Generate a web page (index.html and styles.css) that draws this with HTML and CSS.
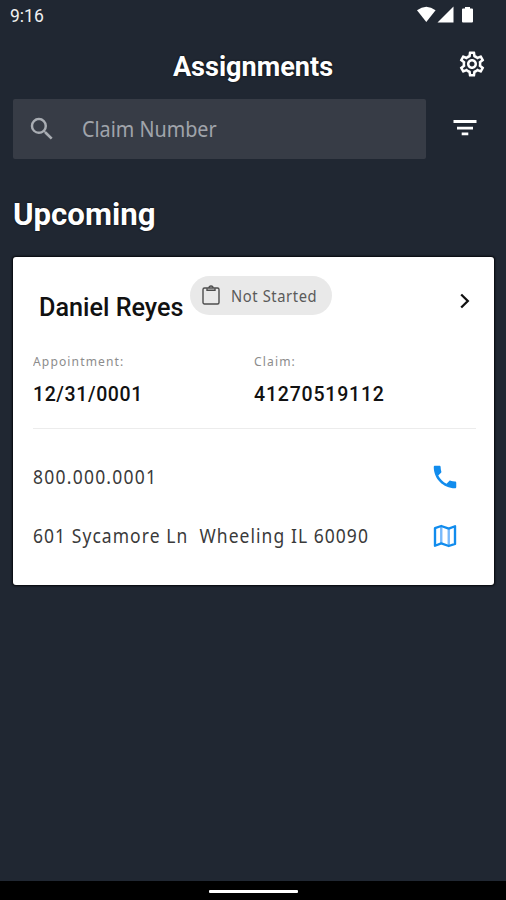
FILE: index.html
```html
<!DOCTYPE html>
<html lang="en">
<head>
<meta charset="utf-8">
<title>Assignments</title>
<link rel="stylesheet" href="styles.css">
</head>
<body>
<div class="status">
  <span class="time">9:16</span>
  <svg class="status-icons" width="56" height="18" viewBox="0 0 56 18" fill="#fff">
    <path d="M0 4.200Q9.300-2.800 18.600 4.200L9.300 16z"/>
    <path d="M20.500 16.600L36.500 0.600V16.600z"/>
    <path d="M48 1h5v1.500h2a1 1 0 0 1 1 1V15.600a1 1 0 0 1-1 1H46a1 1 0 0 1-1-1V3.500a1 1 0 0 1 1-1h2z"/>
  </svg>
</div>
<header class="header">
  <h1 class="title"><span>Assignments</span></h1>
  <svg class="gear" width="30" height="30" viewBox="0 0 24 24" fill="#fff"><path d="M19.430 12.980c.04-.32.07-.64.07-.98s-.03-.66-.07-.98l2.110-1.650c.19-.15.24-.42.12-.64l-2-3.460c-.09-.16-.26-.25-.44-.25-.06 0-.12.010-.17.030l-2.490 1c-.52-.4-1.080-.73-1.690-.98l-.38-2.650C14.460 2.180 14.250 2 14 2h-4c-.25 0-.46.18-.49.42l-.38 2.650c-.61.25-1.170.59-1.690.98l-2.490-1c-.06-.02-.12-.03-.18-.03-.17 0-.34.09-.43.25l-2 3.460c-.13.22-.07.49.12.64l2.110 1.650c-.04.32-.07.65-.07.98s.03.66.07.98l-2.110 1.650c-.19.15-.24.42-.12.64l2 3.460c.09.16.26.25.44.25.06 0 .12-.01.17-.03l2.490-1c.52.4 1.080.73 1.690.98l.38 2.650c.03.24.24.42.49.42h4c.25 0 .46-.18.49-.42l.38-2.650c.61-.25 1.170-.59 1.690-.98l2.490 1c.06.02.12.03.18.03.17 0 .34-.09.43-.25l2-3.460c.12-.22.07-.49-.12-.64l-2.110-1.650zm-1.980-1.710c.04.31.05.52.05.73 0 .21-.02.43-.05.73l-.14 1.130.89.7 1.080.84-.7 1.210-1.270-.51-1.040-.42-.9.680c-.43.32-.84.56-1.250.73l-1.060.43-.16 1.130-.2 1.350h-1.400l-.19-1.350-.16-1.130-1.060-.43c-.43-.18-.83-.41-1.230-.71l-.91-.7-1.060.43-1.270.51-.7-1.210 1.080-.84.89-.7-.14-1.130c-.03-.31-.05-.54-.05-.74s.02-.43.05-.73l.14-1.130-.89-.7-1.080-.84.7-1.210 1.270.51 1.040.42.9-.68c.43-.32.84-.56 1.250-.73l1.060-.43.16-1.130.2-1.350h1.390l.19 1.350.16 1.130 1.060.43c.43.18.83.41 1.230.71l.91.7 1.060-.43 1.270-.51.7 1.210-1.070.85-.89.7.14 1.130zM12 8c-2.210 0-4 1.790-4 4s1.790 4 4 4 4-1.790 4-4-1.790-4-4-4zm0 6c-1.100 0-2-.9-2-2s.9-2 2-2 2 .9 2 2-.9 2-2 2z"/></svg>
</header>
<div class="search-row">
  <div class="search">
    <svg width="30" height="30" viewBox="0 0 24 24" fill="#a9adb3"><path d="M15.500 14h-.79l-.28-.27A6.470 6.470 0 0 0 16 9.500 6.500 6.500 0 1 0 9.500 16c1.610 0 3.090-.59 4.230-1.570l.27.28v.79l5 4.990L20.490 19l-4.990-5zm-6 0C7.010 14 5 11.990 5 9.500S7.010 5 9.500 5 14 7.010 14 9.500 11.990 14 9.500 14z"/></svg>
    <span class="placeholder">Claim Number</span>
  </div>
  <svg class="filter" width="24" height="18" viewBox="0 0 24 18" fill="#fff"><path d="M0.500 1h23v3H0.500zM4 7.800h16v2.800H4zM8.700 13.500h6.600v2.800H8.700z"/></svg>
</div>
<h2 class="section"><span>Upcoming</span></h2>
<article class="card">
  <div class="card-head">
    <span class="name">Daniel Reyes</span>
    <span class="chip">
      <svg width="18" height="21" viewBox="0 0 18 21" fill="none" stroke="#4d4d4d" stroke-width="1.400"><rect x="1" y="3" width="16" height="16" rx="1.500"/><path d="M5 3.200v2h8v-2M7 3a2 2 0 0 1 4 0"/></svg>
      <span class="chip-text">Not Started</span>
    </span>
    <svg class="chevron" width="10" height="16" viewBox="0 0 10 16" fill="none" stroke="#111" stroke-width="2.300"><path d="M1.200 1.500L7.800 8l-6.600 6.500"/></svg>
  </div>
  <div class="facts">
    <div class="fact"><span class="label">Appointment:</span><span class="value date">12/31/0001</span></div>
    <div class="fact"><span class="label">Claim:</span><span class="value">41270519112</span></div>
  </div>
  <div class="contact">
    <span class="line phone">800.000.0001</span>
    <svg width="30" height="30" viewBox="0 0 24 24" fill="#118ced"><path d="M6.620 10.790c1.440 2.830 3.760 5.140 6.590 6.590l2.200-2.200c.27-.27.67-.36 1.020-.24 1.120.37 2.330.57 3.570.57.55 0 1 .45 1 1V20c0 .55-.45 1-1 1C10.610 21 3 13.390 3 4c0-.55.45-1 1-1h3.500c.55 0 1 .45 1 1 0 1.250.2 2.450.57 3.570.11.35.03.74-.25 1.020l-2.200 2.200z"/></svg>
  </div>
  <div class="contact">
    <span class="line address">601 Sycamore Ln&nbsp; Wheeling IL 60090</span>
    <svg width="30" height="30" viewBox="0 0 24 24" fill="none" stroke="#118ced" stroke-width="1.900" stroke-linejoin="round"><path d="M9 4.500v13M15 6.500v13" stroke="#78b9fb"/><path d="M4 5.700L9 4l6 2.100 5-1.900v14.100L15 20l-6-2.100-5 1.900z"/></svg>
  </div>
</article>
<footer class="nav"><div class="handle"></div></footer>
</body>
</html>
```
FILE: styles.css
```css
* { box-sizing: border-box; }
body {
  margin: 0;
  height: 900px;
  display: flex;
  flex-direction: column;
  background: #202732;
  color: #fff;
  font-family: Roboto, sans-serif;
  overflow: hidden;
}
svg { display: block; flex: none; }
span { white-space: nowrap; }
.status {
  height: 32px;
  padding: 0 33px 0 10px;
  display: flex;
  align-items: center;
  justify-content: space-between;
}
.time { font-size: 17.500px; color: #f1f1f1; }
.status-icons { margin-top: -2px; }
.header {
  height: 67px;
  padding: 0 19px 0 49px;
  display: flex;
  align-items: center;
}
.title {
  flex: 1;
  margin: 2px 0 0;
  text-align: center;
  font-size: 27.100px;
  line-height: 32px;
  font-weight: 700;
}
.gear { margin-top: -3px; }
.title, .section { text-shadow: 0 0 2px #000; }
.search-row {
  height: 60px;
  padding: 0 29px 0 13px;
  display: flex;
  align-items: center;
  justify-content: space-between;
}
.search {
  width: 413px;
  height: 60px;
  padding-left: 14px;
  border-radius: 2px;
  background: #373c46;
  display: flex;
  align-items: center;
  gap: 25px;
}
.placeholder, .chip-text, .label, .line {
  font-family: "Noto Sans", sans-serif;
  transform-origin: left center;
}
.placeholder {
  margin-top: -2px;
  font-size: 21.500px;
  color: #a0a4ab;
  transform: scaleX(.92);
}
.filter { margin-top: -2px; }
.section {
  margin: 38px 0 0 13px;
  font-size: 31.200px;
  line-height: 36px;
  font-weight: 700;
}
.card {
  height: 328px;
  margin: 24px 12px 0 13px;
  border-radius: 3px;
  padding: 19px 18px 0 20px;
  background: #fff;
  color: #111;
  box-shadow: 0 0 2px 1px #06080c;
}
.card-head {
  height: 72px;
  padding: 0 6px;
  display: flex;
  align-items: flex-start;
}
.name {
  width: 151px;
  margin-top: 17px;
  font-size: 25.200px;
  line-height: 30px;
  font-weight: 500;
}
.chip {
  width: 142px;
  height: 39px;
  padding-left: 12px;
  border-radius: 20px;
  background: #e9e9e9;
  display: flex;
  align-items: center;
  gap: 11px;
}
.chip-text {
  font-size: 16px;
  color: #5a5a5a;
  letter-spacing: .650px;
  transform: scaleX(.92);
}
.chevron { margin: 17px 0 0 auto; }
.facts {
  height: 81px;
  display: grid;
  grid-template-columns: 221px 1fr;
  border-bottom: 1px solid #ececec;
}
.fact { display: flex; flex-direction: column; }
.label {
  margin-top: 3px;
  font-size: 13px;
  line-height: 20px;
  color: #8c8c8c;
  letter-spacing: 1.200px;
  transform: scaleX(.93);
}
.value {
  margin-top: 12px;
  font-size: 19.500px;
  line-height: 24px;
  font-weight: 500;
  letter-spacing: .8px;
}
.date { letter-spacing: .6px; }
.contact {
  height: 59px;
  padding-right: 16px;
  display: flex;
  align-items: center;
  justify-content: space-between;
}
.facts + .contact { margin-top: 18px; }
.line {
  font-size: 19px;
  color: #3a3a3a;
  letter-spacing: 1.350px;
  transform: scaleX(.92);
}
.address { letter-spacing: 1.150px; }
.nav {
  height: 19px;
  margin-top: auto;
  background: #000;
  display: flex;
  justify-content: center;
  padding-top: 9px;
}
.handle { width: 89px; height: 3px; background: #fff; border-radius: 1px; }
```
